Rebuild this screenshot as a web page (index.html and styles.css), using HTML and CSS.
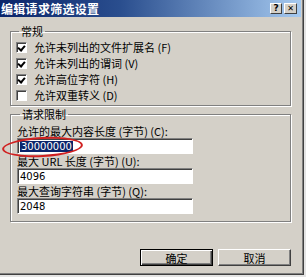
FILE: index.html
```html
<!DOCTYPE html>
<html lang="zh-CN">
<head>
  <meta charset="UTF-8" />
  <title>编辑请求筛选设置</title>
  <link rel="stylesheet" href="styles.css">
</head>
<body>

  <div class="window">
    <!-- Title bar -->
    <div class="titlebar">
      <span class="title">编辑请求筛选设置</span>
      <div class="caption-btns">
        <span class="cbtn">?</span>
        <span class="cbtn close">&#x2715;</span>
      </div>
    </div>

    <div class="content">
      <!-- General -->
      <fieldset class="group general">
        <legend>常规</legend>
        <div class="check"><span class="box on"></span>允许未列出的文件扩展名 (F)</div>
        <div class="check"><span class="box on"></span>允许未列出的谓词 (V)</div>
        <div class="check"><span class="box on"></span>允许高位字符 (H)</div>
        <div class="check"><span class="box"></span>允许双重转义 (D)</div>
      </fieldset>

      <!-- Request limits -->
      <fieldset class="group limits">
        <legend>请求限制</legend>
        <div class="field-label">允许的最大内容长度 (字节) (C):</div>
        <div class="input"><span class="sel">30000000</span></div>
        <div class="field-label">最大 URL 长度 (字节) (U):</div>
        <div class="input">4096</div>
        <div class="field-label">最大查询字符串 (字节) (Q):</div>
        <div class="input">2048</div>
      </fieldset>

      <div class="buttons">
        <button class="btn default">确定</button>
        <button class="btn">取消</button>
      </div>
    </div>

    <!-- red marker drawn over the first field -->
    <div class="marker"></div>
  </div>

</body>
</html>
```

FILE: styles.css
```css
* { margin: 0; padding: 0; box-sizing: border-box; }
body { background: #e4e4e4; font-family: "Noto Sans CJK SC", "DejaVu Sans", sans-serif; font-size: 11px; color: #000; overflow: hidden; }

.window { position: relative; width: 304px; height: 275px; background: #d4d0c8; border-right: 1px solid #404040; border-bottom: 1px solid #404040; box-shadow: inset -1px -1px 0 #808080; }

.titlebar { height: 17px; margin-right: 2px; display: flex; align-items: center; justify-content: space-between; background: linear-gradient(to right, #0a246a, #2a4e8e 40%, #a6caf0); }
.title { color: #fff; font-weight: bold; font-size: 12px; line-height: 17px; padding-left: 1px; letter-spacing: 0.3px; }
.caption-btns { display: flex; gap: 2px; padding-right: 4px; }
.cbtn { width: 12px; height: 11px; background: #d4d0c8; border: 1px solid; border-color: #fff #404040 #404040 #fff; font: bold 9px/9px "DejaVu Sans", sans-serif; text-align: center; color: #000; }
.cbtn.close { width: 13px; font-size: 8px; }

.content { padding-left: 10px; }

.group { width: 281px; border: 1px solid #808080; box-shadow: inset 1px 1px 0 #fff, 1px 1px 0 #fff; }
.group legend { margin-left: 3px; padding: 0 2px; line-height: 12px; height: 12px; }
.general { margin-top: 8px; padding: 2px 6px 2px 5px; }
.limits { margin-top: 2px; padding: 4px 6px 7px 6px; }

.check { height: 16px; display: flex; align-items: center; }
.box { width: 11px; height: 11px; margin-right: 7px; background: #fff; border: 1px solid; border-color: #808080 #fff #fff #808080; box-shadow: inset 1px 1px 0 #404040; position: relative; }
.box.on::after { content: ""; position: absolute; left: 2px; top: 1px; width: 3px; height: 5px; border: solid #000; border-width: 0 2px 2px 0; transform: rotate(40deg); }

.field-label { height: 14px; line-height: 14px; }
.input { width: 176px; height: 16px; background: #fff; border: 1px solid; border-color: #808080 #fff #fff #808080; box-shadow: inset 1px 1px 0 #404040; padding: 2px 2px 0 2px; font: 10px/11px "DejaVu Sans", sans-serif; }
.sel { background: #0a246a; color: #fff; padding: 0 1px; }

.buttons { display: flex; gap: 5px; width: 281px; justify-content: flex-end; margin-top: 27px; }
.btn { width: 73px; height: 17px; background: #d4d0c8; border: 1px solid; border-color: #fff #404040 #404040 #fff; box-shadow: inset -1px -1px 0 #808080; font: 11px/14px "Noto Sans CJK SC", sans-serif; color: #000; }
.btn.default { border: 1px solid #000; box-shadow: inset 1px 1px 0 #fff, inset -1px -1px 0 #404040, inset -2px -2px 0 #808080; }

.marker { position: absolute; left: 2px; top: 137px; width: 81px; height: 20px; border: 2px solid #d02020; border-radius: 50%; transform: rotate(-3deg); }
```
